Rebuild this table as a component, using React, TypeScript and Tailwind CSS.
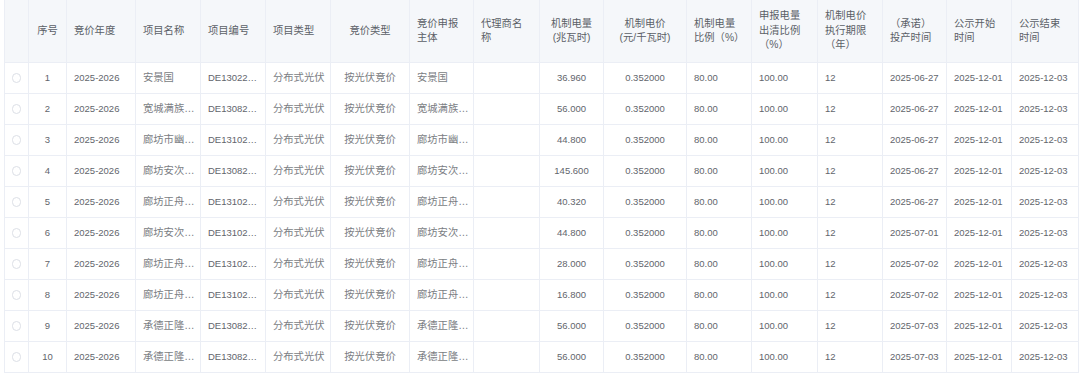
import React from "react";

type Col = { w: string; center?: boolean; head: React.ReactNode };

const COLS: Col[] = [
  { w: "w-[24px]", center: true, head: "" },
  { w: "w-[38px]", center: true, head: "序号" },
  { w: "w-[69px]", head: "竞价年度" },
  { w: "w-[65px]", head: "项目名称" },
  { w: "w-[65px]", head: "项目编号" },
  { w: "w-[65px]", head: "项目类型" },
  { w: "w-[79px]", center: true, head: "竞价类型" },
  { w: "w-[64px]", head: <>竞价申报<br />主体</> },
  { w: "w-[66px]", head: <>代理商名<br />称</> },
  { w: "w-[64px]", center: true, head: <>机制电量<br />(兆瓦时)</> },
  { w: "w-[83px]", center: true, head: <>机制电价<br />(元/千瓦时)</> },
  { w: "w-[65px]", head: <>机制电量<br />比例（%）</> },
  { w: "w-[66px]", head: <>申报电量<br />出清比例<br />（%）</> },
  { w: "w-[65px]", head: <>机制电价<br />执行期限<br />（年）</> },
  { w: "w-[64px]", head: <>（承诺）<br />投产时间</> },
  { w: "w-[65px]", head: <>公示开始<br />时间</> },
  { w: "w-[67px]", head: <>公示结束<br />时间</> },
];

// 序号, 项目名称, 项目编号, 申报主体, 电量, 投产时间
const ROWS = [
  ["1", "安景国", "DE13022…", "安景国", "36.960", "2025-06-27"],
  ["2", "宽城满族…", "DE13082…", "宽城满族…", "56.000", "2025-06-27"],
  ["3", "廊坊市幽…", "DE13102…", "廊坊市幽…", "44.800", "2025-06-27"],
  ["4", "廊坊安次…", "DE13082…", "廊坊安次…", "145.600", "2025-06-27"],
  ["5", "廊坊正舟…", "DE13102…", "廊坊正舟…", "40.320", "2025-06-27"],
  ["6", "廊坊安次…", "DE13102…", "廊坊安次…", "44.800", "2025-07-01"],
  ["7", "廊坊正舟…", "DE13102…", "廊坊正舟…", "28.000", "2025-07-02"],
  ["8", "廊坊正舟…", "DE13102…", "廊坊正舟…", "16.800", "2025-07-02"],
  ["9", "承德正隆…", "DE13082…", "承德正隆…", "56.000", "2025-07-03"],
  ["10", "承德正隆…", "DE13082…", "承德正隆…", "56.000", "2025-07-03"],
];

const NUM = "text-[9.5px] text-[#62656c]";
const CJK = "text-[10.3px] text-[#7a7d83]";

export default function App() {
  return (
    <div className="w-[1080px] h-[377px] bg-white pl-[4px] overflow-hidden"
      style={{ fontFamily: "'Liberation Sans', 'Noto Sans CJK SC', sans-serif" }}>
      <div className="w-[1075px] border-l border-[#ebeef5]">
        <div className="flex bg-[#f5f7fa] text-[#5b5f67]">
          {COLS.map((c, i) => (
            <div key={i}
              className={`${c.w} text-[10.3px] h-[63px] shrink-0 flex items-center px-[7px] leading-[14.5px] border-r border-b border-[#ebeef5] ${c.center ? "justify-center text-center" : "text-left"}`}>
              <div>{c.head}</div>
            </div>
          ))}
        </div>
        {ROWS.map((r) => {
          const cells: [string, string][] = [
            ["", ""],
            [r[0], NUM],
            ["2025-2026", NUM],
            [r[1], CJK],
            [r[2], NUM],
            ["分布式光伏", CJK],
            ["按光伏竞价", CJK],
            [r[3], CJK],
            ["", ""],
            [r[4], NUM],
            ["0.352000", NUM],
            ["80.00", NUM],
            ["100.00", NUM],
            ["12", NUM],
            [r[5], NUM],
            ["2025-12-01", NUM],
            ["2025-12-03", NUM],
          ];
          return (
            <div key={r[0]} className="flex">
              {cells.map(([t, size], i) => (
                <div key={i}
                  className={`${COLS[i].w} ${size} h-[31px] shrink-0 flex items-center px-[7px] whitespace-nowrap overflow-hidden border-r border-b border-[#ebeef5] ${COLS[i].center ? "justify-center" : ""}`}>
                  {i === 0 ? (
                    <span className="block w-[10px] h-[10px] rounded-full border border-[#dcdfe6] bg-white" />
                  ) : (
                    t
                  )}
                </div>
              ))}
            </div>
          );
        })}
      </div>
    </div>
  );
}
